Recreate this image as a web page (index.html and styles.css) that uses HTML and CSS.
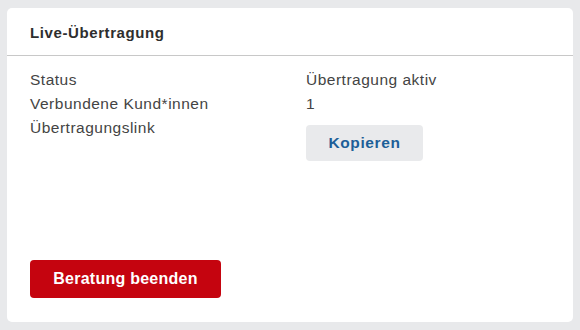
FILE: index.html
```html
<!DOCTYPE html>
<html lang="de">
<head>
<meta charset="utf-8">
<link rel="stylesheet" href="styles.css">
</head>
<body>
<div class="card">
  <div class="card-header">Live-Übertragung</div>
  <div class="card-body">
    <div class="info">
      <div class="label">Status</div>
      <div class="value">Übertragung aktiv</div>
      <div class="label">Verbundene Kund*innen</div>
      <div class="value">1</div>
      <div class="label">Übertragungslink</div>
      <div class="value"><button class="btn-copy">Kopieren</button></div>
    </div>
    <div class="actions">
      <button class="btn-end">Beratung beenden</button>
    </div>
  </div>
</div>
</body>
</html>
```
FILE: styles.css
```css
html, body {
  margin: 0;
  padding: 0;
  background: #e8e9eb;
  font-family: "Liberation Sans", Arial, sans-serif;
  color: #3a3a3a;
}
body {
  padding: 8px 7px 8px 7px;
  height: 330px;
  box-sizing: border-box;
}
.card {
  background: #fff;
  border-radius: 5px;
  height: 314px;
  display: flex;
  flex-direction: column;
  box-sizing: border-box;
}
.card-header {
  height: 48px;
  box-sizing: border-box;
  padding: 16px 23px 0;
  font-weight: bold;
  font-size: 15px;
  letter-spacing: 0.6px;
  line-height: 17px;
  color: #2e2e2e;
  border-bottom: 1px solid #c8c8c8;
}
.card-body {
  flex: 1;
  display: flex;
  flex-direction: column;
  justify-content: space-between;
  padding: 12px 23px 24px;
}
.info {
  display: grid;
  grid-template-columns: 276px 1fr;
  font-size: 15.5px;
  letter-spacing: 0.5px;
  line-height: 24px;
  color: #444;
}
.btn-copy {
  margin-top: 9px;
  width: 117px;
  height: 36px;
  border: none;
  border-radius: 4px;
  background: #e9eaec;
  color: #1d5f98;
  font-family: inherit;
  font-weight: bold;
  font-size: 15.5px;
  letter-spacing: 0.6px;
  padding: 0;
}
.btn-end {
  width: 191px;
  height: 38px;
  border: none;
  border-radius: 4px;
  background: #c5040f;
  color: #fff;
  font-family: inherit;
  font-weight: bold;
  font-size: 16px;
  letter-spacing: 0.25px;
  padding: 0;
}
```
